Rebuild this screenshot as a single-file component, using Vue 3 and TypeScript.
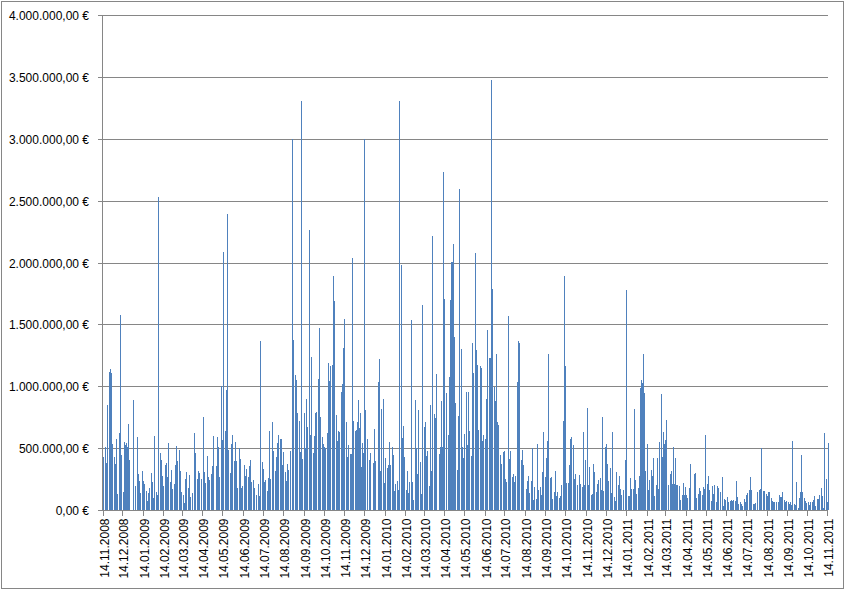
<template>
  <div class="page">
    <div class="frame">
      <svg class="chart" width="841" height="586" viewBox="2 2 841 586">
        <g class="grid">
          <line v-for="t in yTicks" :key="t.label" x1="98" x2="828" :y1="t.y + 0.5" :y2="t.y + 0.5" />
          <line x1="102.5" x2="102.5" y1="15" y2="511" />
          <line v-for="t in xTicks" :key="t.label" :x1="t.x + 0.5" :x2="t.x + 0.5" y1="510" y2="516" />
        </g>

        <path class="bars" :d="barPath" />

        <text v-for="t in yTicks" :key="t.label" class="label" x="89" :y="t.y + 5" text-anchor="end">{{ t.label }}</text>
        <text
          v-for="t in xTicks"
          :key="t.label"
          class="label"
          text-anchor="end"
          :transform="`translate(${t.x + 5.5} 518.5) rotate(-90)`"
        >{{ t.label }}</text>
      </svg>
    </div>
  </div>
</template>

<script setup lang="ts">
// bars read off the picture: x:top pairs, baseline is y=510
const raw = `103:457 105:447 106:463 107:405 109:372 110:369 111:373 112:444 114:457 115:464 116:439 117:494 119:433 120:315 121:455
123:492 124:442 125:445 126:443 127:447 128:424 129:460 133:400 135:486 137:437 138:474 139:481 140:493 142:471 143:481 144:484
146:491 147:501 148:493 149:488 151:473 152:482 153:498 154:436 156:492 157:495 158:197 160:453 161:460 162:476 163:486 165:465
166:463 167:477 168:443 170:482 171:470 172:489 174:484 175:465 176:446 177:461 179:450 180:471 181:492 183:495 184:503 185:479
186:472 188:488 189:475 190:497 192:493 194:433 195:453 197:479 198:471 199:473 201:479 203:417 204:472 205:483 207:456 208:477
209:480 211:474 212:466 213:436 216:466 217:437 218:447 219:477 221:386 222:440 223:252 225:431 226:390 227:214 228:450 230:473
231:444 232:435 234:461 235:442 236:461 237:488 239:448 240:459 241:488 242:486 244:465 245:476 246:469 248:477 249:466 250:460
251:482 253:480 254:488 256:495 258:484 259:496 260:341 262:462 263:469 264:482 265:480 267:491 268:478 269:431 270:479 272:422
273:451 275:471 276:457 277:443 278:435 280:439 281:439 282:465 283:452 285:472 286:481 287:464 288:470 290:451 292:139 293:340
295:375 296:380 297:413 299:421 300:452 301:101 302:459 304:413 305:448 306:399 307:427 309:230 310:435 311:357 313:453 314:436
315:413 316:412 318:379 319:328 320:417 322:437 323:444 324:447 325:448 327:433 328:363 329:381 330:366 332:365 333:276 334:301
336:415 337:441 338:431 339:432 341:392 342:384 343:348 344:319 346:422 347:457 348:445 350:454 351:454 352:258 353:421 355:431
356:430 357:422 358:400 359:428 360:413 361:467 362:443 363:453 364:139 365:410 367:439 369:460 370:453 373:463 374:429 375:461
378:382 379:359 380:471 381:409 383:399 384:483 385:458 387:468 388:465 389:442 390:465 392:447 393:455 394:491 395:484 397:481
398:490 399:101 401:265 402:438 403:426 404:457 406:490 407:471 408:493 409:482 411:320 412:482 413:500 415:400 416:448 417:474
418:410 420:462 421:494 422:305 424:427 425:422 426:456 427:451 429:486 430:405 431:471 432:236 434:414 435:418 436:374 439:454
440:447 441:401 442:447 443:172 444:299 446:393 448:435 449:377 450:300 451:262 452:262 453:244 454:337 455:403 457:470 458:416
459:189 461:349 462:447 463:458 464:434 466:392 467:445 468:392 469:431 471:456 472:343 473:373 475:253 476:350 477:365 478:430
480:366 481:368 482:441 483:435 485:439 486:399 487:330 489:358 490:358 491:80 492:289 494:387 495:401 496:354 497:422 498:425
500:455 501:464 503:452 504:451 505:479 506:482 508:316 509:459 510:451 512:477 513:474 514:482 515:476 517:382 518:341 519:343
521:460 522:450 523:465 526:489 527:481 528:476 529:493 531:481 532:448 533:500 534:487 536:499 537:444 538:490 540:487 541:495
542:472 543:432 545:477 546:458 547:441 548:354 550:478 551:477 552:499 554:492 555:471 556:496 557:492 559:498 560:496 561:485
563:421 564:276 565:366 566:483 568:483 569:465 570:439 571:437 573:445 574:479 575:474 577:485 579:475 580:484 582:487 583:432
584:485 585:460 587:408 588:485 589:467 591:495 592:494 593:464 594:472 596:492 597:484 598:480 600:478 601:490 602:417 603:491
605:447 606:444 607:464 608:481 610:468 611:493 612:432 614:497 615:501 616:472 618:485 619:476 620:489 621:495 623:490 625:460
626:290 628:496 629:496 630:478 631:489 633:489 634:409 635:480 636:494 638:488 639:476 640:388 641:380 642:383 643:354 644:393
645:471 647:444 648:490 649:480 651:470 652:476 653:458 654:496 656:485 657:458 658:489 659:442 661:394 662:457 663:432 664:444
665:440 666:420 668:485 670:474 671:471 672:484 673:447 674:484 675:458 676:485 677:485 679:486 680:500 682:495 683:483 684:495
685:487 686:495 687:498 689:488 690:464 694:474 695:473 696:498 698:494 699:488 700:491 702:495 703:487 704:489 705:435 707:484
708:476 709:490 711:501 712:486 713:494 714:485 716:502 717:486 718:488 720:492 722:477 723:506 724:499 725:500 727:497 728:502
730:501 731:500 732:501 733:500 735:501 736:481 737:497 738:504 740:502 741:504 742:506 744:499 745:502 746:495 747:493 749:490
750:477 751:490 753:504 754:504 755:503 757:492 759:490 760:489 761:448 763:491 764:491 766:494 767:496 768:492 769:492 771:498
772:501 773:502 774:502 776:502 778:502 779:495 780:497 781:497 782:492 784:500 785:502 786:501 788:502 789:504 790:502 791:505
792:441 794:504 795:505 796:482 798:508 799:498 800:492 801:455 802:492 804:498 805:501 806:503 808:502 809:505 810:502 812:502
813:500 814:496 815:506 817:499 818:499 819:495 821:488 822:496 823:508 824:433 826:479 827:502 828:443`

const bars = raw.trim().split(/\s+/).map((pair) => pair.split(':').map(Number))

const barPath = bars.map(([x, top]) => `M${x + 0.5} 510V${top}`).join('')

const yTicks = ['4.000.000,00 €', '3.500.000,00 €', '3.000.000,00 €', '2.500.000,00 €', '2.000.000,00 €', '1.500.000,00 €', '1.000.000,00 €', '500.000,00 €', '0,00 €']
  .map((label, i) => ({ label, y: Math.round(15 + i * 61.875) }))

// monthly date axis, 14.11.2008 to 14.11.2011
const DAY = 86400000
const start = Date.UTC(2008, 10, 14)
const xTicks = Array.from({ length: 37 }, (_, i) => {
  const d = new Date(Date.UTC(2008, 10 + i, 14))
  const month = String(d.getUTCMonth() + 1).padStart(2, '0')
  const days = (d.getTime() - start) / DAY
  return {
    label: `14.${month}.${d.getUTCFullYear()}`,
    x: Math.round(102.5 + days * 0.6621),
  }
})
</script>

<style scoped>
.page {
  width: 845px;
  height: 590px;
  background: #fff;
  padding: 1px;
  box-sizing: border-box;
}

.frame {
  width: 843px;
  height: 588px;
  border: 1px solid #868686;
  box-sizing: border-box;
}

.chart {
  display: block;
}

.grid line {
  stroke: #868686;
  stroke-width: 1;
  shape-rendering: crispEdges;
}

.bars {
  fill: none;
  stroke: #4f81bd;
  stroke-width: 1;
  shape-rendering: crispEdges;
}

.label {
  font-family: "Liberation Sans", Arial, sans-serif;
  font-size: 12px;
  fill: #000;
}
</style>
